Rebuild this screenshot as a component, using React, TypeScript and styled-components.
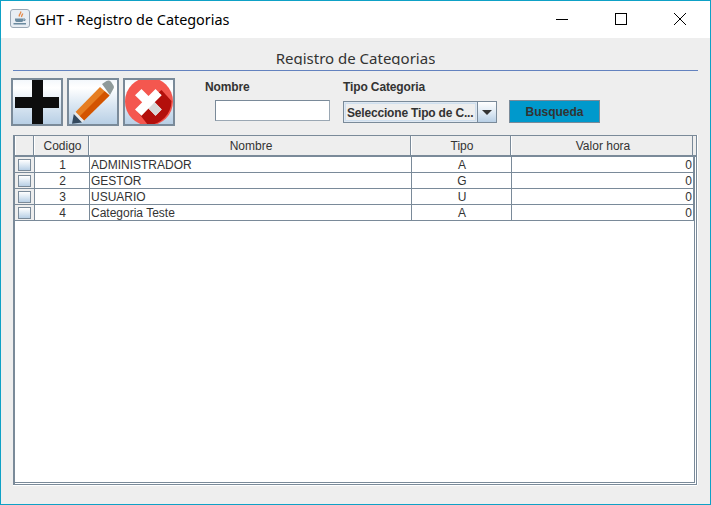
import React from 'react';
import styled, { createGlobalStyle } from 'styled-components';

const Global = createGlobalStyle`
    html, body { margin: 0; padding: 0; background: #eeeeee; }
    * { box-sizing: border-box; }
`;

const Frame = styled.div`
    width: 711px;
    height: 505px;
    display: flex;
    flex-direction: column;
    border: 1px solid #0ea1c6;
    background: #eeeeee;
    font-family: "Liberation Sans", Arial, sans-serif;
    color: #333333;
    overflow: hidden;
`;

const TitleBar = styled.div`
    height: 37px;
    flex: none;
    display: flex;
    align-items: center;
    background: #ffffff;
    padding-left: 9px;
`;

const AppIcon = styled.svg`
    width: 20px;
    height: 19px;
    flex: none;
    margin-top: -2px;
`;

const WindowTitle = styled.span`
    flex: 1;
    margin-left: 5px;
    margin-top: -1px;
    font-family: "Noto Sans", sans-serif;
    font-size: 14.4px;
    color: #000000;
    white-space: nowrap;
`;

const WindowControl = styled.svg<{ $last?: boolean }>`
    width: 46px;
    height: 30px;
    flex: none;
    margin-right: ${p => (p.$last ? 7 : 13)}px;
    margin-top: -2px;
`;

const Heading = styled.div`
    height: 33px;
    margin: 0 12px;
    border-bottom: 1px solid #6382bf;
    display: flex;
    justify-content: center;
    align-items: flex-start;
    padding-top: 10px;
    overflow: hidden;
`;

const HeadingText = styled.span`
    display: block;
    height: 17px;
    overflow: hidden;
    font-family: "Noto Sans", sans-serif;
    font-size: 15px;
    line-height: 20px;
    color: #333333;
`;

const Toolbar = styled.div`
    display: flex;
    align-items: flex-start;
    margin-top: 7px;
    padding-left: 10px;
    height: 48px;
`;

const IconButton = styled.button`
    width: 52px;
    height: 48px;
    padding: 0;
    margin-right: 4px;
    display: flex;
    align-items: center;
    justify-content: center;
    border: 2px solid #7a8a99;
    background: linear-gradient(#f4f8fc 0%, #ffffff 18%, #dce8f3 55%, #b8cfe5 100%);
`;

const ButtonIcon = styled.svg`
    width: 48px;
    height: 44px;
    display: block;
`;

const Field = styled.div<{ $left: number; $width: number }>`
    margin-left: ${p => p.$left}px;
    width: ${p => p.$width}px;
    flex: none;
`;

const FieldLabel = styled.div`
    font-size: 12px;
    font-weight: 700;
    line-height: 14px;
    margin-top: 2px;
    letter-spacing: -0.12px;
    color: #333333;
`;

const TextInput = styled.input`
    display: block;
    width: 115px;
    height: 21px;
    margin: 6px 0 0 10px;
    background: #ffffff;
    border: 1px solid #7a8a99;
    border-right-color: #9aa7b3;
    border-bottom-color: #9aa7b3;
    outline: none;
`;

const Combo = styled.div`
    display: flex;
    width: 154px;
    height: 22px;
    margin-top: 7px;
    border: 1px solid #7a8a99;
    background: #dfe8f2;
`;

const ComboValue = styled.div`
    width: 131px;
    margin: 1px;
    padding-left: 1px;
    font-size: 12px;
    font-weight: 700;
    line-height: 18px;
    letter-spacing: -0.18px;
    color: #333333;
    background: #eeeeee;
    border: 1px solid #cfdfee;
    white-space: nowrap;
`;

const ComboArrow = styled.div`
    flex: 1;
    display: flex;
    align-items: center;
    justify-content: center;
    border-left: 1px solid #7a8a99;
    background: linear-gradient(#ffffff, #dce8f3 55%, #b8cfe5);

    &::after {
        content: '';
        width: 0;
        height: 0;
        margin-top: 1px;
        border-left: 5px solid transparent;
        border-right: 5px solid transparent;
        border-top: 5px solid #333333;
    }
`;

const SearchButton = styled.button`
    width: 91px;
    height: 23px;
    margin: 22px 0 0 12px;
    padding: 0;
    background: #0099cc;
    border: 1px solid #7a8a99;
    font-family: "Liberation Sans", Arial, sans-serif;
    font-size: 12px;
    font-weight: 700;
    color: #333333;
`;

const TablePane = styled.div`
    width: 684px;
    height: 350px;
    margin: 9px 0 0 12px;
    display: flex;
    flex-direction: column;
    background: #ffffff;
    border-top: 1px solid #7a8a99;
    border-left: 2px solid #7a8a99;
    border-right: 1px solid #7a8a99;
    border-bottom: 1px solid #7a8a99;
    box-shadow: 0 1px 0 #ffffff, 1px 0 0 #ffffff;
`;

const headerColumns = '19px 55px 322px 100px 182px';
const rowColumns = '20px 55px 322px 100px 182px';

const HeaderRow = styled.div`
    display: grid;
    grid-template-columns: ${headerColumns};
    height: 21px;
    flex: none;
    background: #eeeeee;
    border-bottom: 2px solid #7a8a99;
`;

const HeaderCell = styled.div`
    height: 19px;
    padding-left: 2px;
    font-size: 12px;
    line-height: 21px;
    text-align: center;
    color: #333333;
    background: #eeeeee;
    border-right: 1px solid #7a8a99;
    border-left: 1px solid #ffffff;
`;

const Body = styled.div`
    flex: 1;
    margin: 0 1px 1px 0;
    background: #ffffff;
    border-right: 1px solid #7a8a99;
    border-bottom: 1px solid #7a8a99;
`;

const Row = styled.div`
    display: grid;
    grid-template-columns: ${rowColumns};
    height: 16px;
    border-bottom: 1px solid #7a8a99;
`;

const Cell = styled.div<{ $align?: 'left' | 'center' | 'right' }>`
    font-size: 12px;
    line-height: 16px;
    padding: ${p => (p.$align === 'center' ? '0 0 0 1px' : '0 1px')};
    text-align: ${p => p.$align ?? 'left'};
    color: #333333;
    border-right: 1px solid #7a8a99;
    white-space: nowrap;
    overflow: hidden;
`;

const CheckCell = styled(Cell)`
    display: flex;
    align-items: center;
    padding: 0 0 0 3px;
    background: #eeeeee;
`;

const CheckBox = styled.span`
    display: block;
    width: 13px;
    height: 12px;
    border: 1px solid #7a8a99;
    background: linear-gradient(#ffffff, #dce8f3 50%, #b8cfe5);
`;

type Categoria = {
    codigo: number;
    nombre: string;
    tipo: string;
    valorHora: number;
};

const categorias: Categoria[] = [
    { codigo: 1, nombre: 'ADMINISTRADOR', tipo: 'A', valorHora: 0 },
    { codigo: 2, nombre: 'GESTOR', tipo: 'G', valorHora: 0 },
    { codigo: 3, nombre: 'USUARIO', tipo: 'U', valorHora: 0 },
    { codigo: 4, nombre: 'Categoria Teste', tipo: 'A', valorHora: 0 },
];

const JavaIcon = () => (
    <AppIcon viewBox="0 0 20 19">
        <rect x="0.5" y="0.5" width="19" height="18" rx="2.5" fill="#e8edf3" stroke="#9aa7b5" />
        <path d="M10.500 2.500c1.500 2-2.500 3-1 5M12.500 4.500c.5 1.500-1.500 2-.8 3.500" fill="none" stroke="#e58a4a" strokeWidth="1.400" />
        <path d="M5 9.500h8.500V11c0 1.500-1.200 2-2.500 2H7.500C6 13 5 12.500 5 11z" fill="#6b8a9f" />
        <path d="M13.500 10h1.500v1.500h-1.500" fill="none" stroke="#6b8a9f" />
        <rect x="3.500" y="14" width="12.500" height="1.500" fill="#6b8a9f" />
    </AppIcon>
);

const PlusIcon = () => (
    <ButtonIcon viewBox="0 0 48 44">
        <path d="M19 0h11v17h16v11H30v16H19V28H2V17h17z" fill="#0d0d0d" />
    </ButtonIcon>
);

const PencilIcon = () => (
    <ButtonIcon viewBox="0 0 48 44">
        <path d="M33 4 37.500 1c1.500-.8 3-.8 4.500.8l2 3c1.300 1.700 1.300 3.200 0 4.700L41 15z" fill="#8f9a9a" />
        <path d="M31 7 40.500 15.500 15 40.500 6.500 32z" fill="#e67e22" />
        <path d="M35.700 11.200 40.500 15.500 15 40.500 10.700 36.200z" fill="#d35400" />
        <path d="M6.500 32 15 40.500 13 42.500 4.800 34z" fill="#e9e9e9" />
        <path d="M4.800 34 13 42.500 3 43.800z" fill="#34495e" />
    </ButtonIcon>
);

const CancelIcon = () => (
    <ButtonIcon viewBox="0 0 48 44">
        <circle cx="24" cy="21.500" r="24" fill="#f4574f" />
        <path d="M12 31 36.500 10 46.500 21A24 24 0 0 1 23 45z" fill="#b30f0b" />
        <path d="M16.500 9 23.500 16 30.500 9 36.700 15.200 29.700 22.300 36.700 29.500 30.500 35.700 23.500 28.500 16.500 35.700 10 29.500 17.200 22.300 10 15.200z" fill="#ffffff" />
        <path d="M29.700 22.300 36.700 29.500 30.500 35.700 23.500 28.500z" fill="#d8d8d8" />
    </ButtonIcon>
);

class App extends React.Component {
    public render(): React.ReactNode {
        return (
            <Frame>
                <Global />
                <TitleBar>
                    <JavaIcon />
                    <WindowTitle>GHT - Registro de Categorias</WindowTitle>
                    <WindowControl viewBox="0 0 46 30">
                        <path d="M17 15.500h12" stroke="#000000" fill="none" />
                    </WindowControl>
                    <WindowControl viewBox="0 0 46 30">
                        <rect x="17.500" y="9.500" width="11" height="11" stroke="#000000" fill="none" />
                    </WindowControl>
                    <WindowControl viewBox="0 0 46 30" $last>
                        <path d="M17 9l12 12M29 9L17 21" stroke="#000000" fill="none" />
                    </WindowControl>
                </TitleBar>
                <Heading>
                    <HeadingText>Registro de Categorias</HeadingText>
                </Heading>
                <Toolbar>
                    <IconButton><PlusIcon /></IconButton>
                    <IconButton><PencilIcon /></IconButton>
                    <IconButton><CancelIcon /></IconButton>
                    <Field $left={26} $width={138}>
                        <FieldLabel>Nombre</FieldLabel>
                        <TextInput />
                    </Field>
                    <Field $left={0} $width={154}>
                        <FieldLabel>Tipo Categoria</FieldLabel>
                        <Combo>
                            <ComboValue>Seleccione Tipo de C...</ComboValue>
                            <ComboArrow />
                        </Combo>
                    </Field>
                    <SearchButton>Busqueda</SearchButton>
                </Toolbar>
                <TablePane>
                    <HeaderRow>
                        <HeaderCell />
                        <HeaderCell>Codigo</HeaderCell>
                        <HeaderCell>Nombre</HeaderCell>
                        <HeaderCell>Tipo</HeaderCell>
                        <HeaderCell>Valor hora</HeaderCell>
                    </HeaderRow>
                    <Body>
                        {categorias.map(categoria => (
                            <Row key={categoria.codigo}>
                                <CheckCell><CheckBox /></CheckCell>
                                <Cell $align="center">{categoria.codigo}</Cell>
                                <Cell>{categoria.nombre}</Cell>
                                <Cell $align="center">{categoria.tipo}</Cell>
                                <Cell $align="right">{categoria.valorHora}</Cell>
                            </Row>
                        ))}
                    </Body>
                </TablePane>
            </Frame>
        );
    }
}

export default App;
